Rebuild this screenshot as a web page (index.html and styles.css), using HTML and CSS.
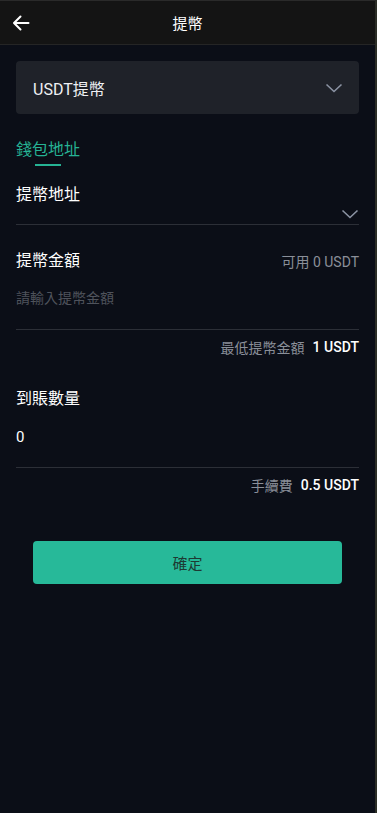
FILE: index.html
```html
<!DOCTYPE html>
<html lang="zh-Hant">
<head>
  <meta charset="UTF-8">
  <meta name="viewport" content="width=device-width, initial-scale=1.0">
  <title>提幣</title>
  <link rel="stylesheet" href="styles.css">
</head>
<body>

<div class="page">
  <div class="header">
    <button class="back-btn">
      <svg width="20" height="20" viewBox="0 0 20 20"><path d="M17.5 10H3.5M9.5 3.5L3 10l6.5 6.5" fill="none" stroke="#fff" stroke-width="2" stroke-linecap="round" stroke-linejoin="round"/></svg>
    </button>
    <div class="title">提幣</div>
  </div>

  <div class="content">
    <div class="coin-select">
      <span>USDT提幣</span>
      <svg width="18" height="10" viewBox="0 0 18 10"><path d="M1.5 1.5L9 8.5l7.5-7" fill="none" stroke="#8b93a3" stroke-width="1.6"/></svg>
    </div>

    <div class="tabs">
      <div class="tab active">錢包地址</div>
    </div>

    <div class="field">
      <div class="field-label">提幣地址</div>
      <div class="field-input address">
        <svg width="18" height="10" viewBox="0 0 18 10"><path d="M1.5 1.5L9 8.5l7.5-7" fill="none" stroke="#8b93a3" stroke-width="1.6"/></svg>
      </div>
    </div>

    <div class="field">
      <div class="field-head">
        <div class="field-label">提幣金額</div>
        <div class="field-extra">可用 0 USDT</div>
      </div>
      <div class="field-input">
        <input type="text" placeholder="請輸入提幣金額">
      </div>
      <div class="field-note">最低提幣金額<b>1 USDT</b></div>
    </div>

    <div class="field received">
      <div class="field-label">到賬數量</div>
      <div class="field-input value">0</div>
      <div class="field-note">手續費<b>0.5 USDT</b></div>
    </div>

    <button class="submit">確定</button>
  </div>
</div>

</body>
</html>
```

FILE: styles.css
```css
* {
  box-sizing: border-box;
}

html, body {
  margin: 0;
  padding: 0;
  height: 100%;
  background: #0b0e17;
  font-family: Roboto, "Noto Sans CJK TC", sans-serif;
  color: #fff;
}

.page {
  min-height: 100%;
  border-top: 1px solid #2a2a2a;
  border-right: 2px solid #2b2d26;
}

.header {
  height: 44px;
  background: #141414;
  border-bottom: 1px solid #252525;
  display: flex;
  align-items: center;
  justify-content: center;
  position: relative;
}

.back-btn {
  position: absolute;
  left: 10px;
  top: 11px;
  background: none;
  border: none;
  padding: 0;
  width: 22px;
  height: 22px;
  display: flex;
  align-items: center;
  justify-content: center;
}

.title {
  font-size: 15px;
}

.content {
  padding: 16px 16px 0 16px;
}

.coin-select {
  height: 53px;
  background: #1f2229;
  border-radius: 4px;
  display: flex;
  align-items: center;
  justify-content: space-between;
  padding: 0 16px 0 17px;
  font-size: 16px;
  color: #eef0f3;
}

.tabs {
  margin-top: 25px;
  display: flex;
}

.tab {
  font-size: 16px;
  color: #26b394;
  position: relative;
  padding-bottom: 5px;
  line-height: 22px;
}

.tab.active::after {
  content: "";
  position: absolute;
  left: 19px;
  width: 26px;
  bottom: 0;
  height: 2px;
  background: #26b394;
}

.field {
  margin-top: 18px;
}

.field + .field {
  margin-top: 25px;
}

.field + .field.received {
  margin-top: 24px;
}

.field-head {
  display: flex;
  justify-content: space-between;
  align-items: center;
}

.field-label {
  font-size: 16px;
  line-height: 22px;
}

.field-extra {
  font-size: 14px;
  color: #8a8f99;
}

.field-input {
  border-bottom: 1px solid #2c2f37;
  height: 58px;
  display: flex;
  align-items: flex-start;
  padding-top: 16px;
}

.field-input.address {
  height: 19px;
  justify-content: flex-end;
  padding-top: 3px;
}

.field-input input {
  width: 100%;
  background: transparent;
  border: none;
  outline: none;
  color: #fff;
  font-family: inherit;
  font-size: 14px;
  line-height: 20px;
  padding: 0;
}

.field-input input::placeholder {
  color: #4f535c;
}

.field-input.value {
  font-size: 15px;
  line-height: 20px;
  padding-top: 17px;
}

.field-note {
  display: flex;
  justify-content: flex-end;
  align-items: center;
  height: 34px;
  font-size: 14px;
  color: #8a8f99;
}

.field-note b {
  font-weight: 500;
  color: #fff;
  margin-left: 8px;
}

.submit {
  display: block;
  width: 309px;
  height: 43px;
  margin: 39px auto 0 auto;
  background: #27b999;
  border: none;
  border-radius: 4px;
  font-family: inherit;
  font-size: 15px;
  color: #1d3a33;
}
```
